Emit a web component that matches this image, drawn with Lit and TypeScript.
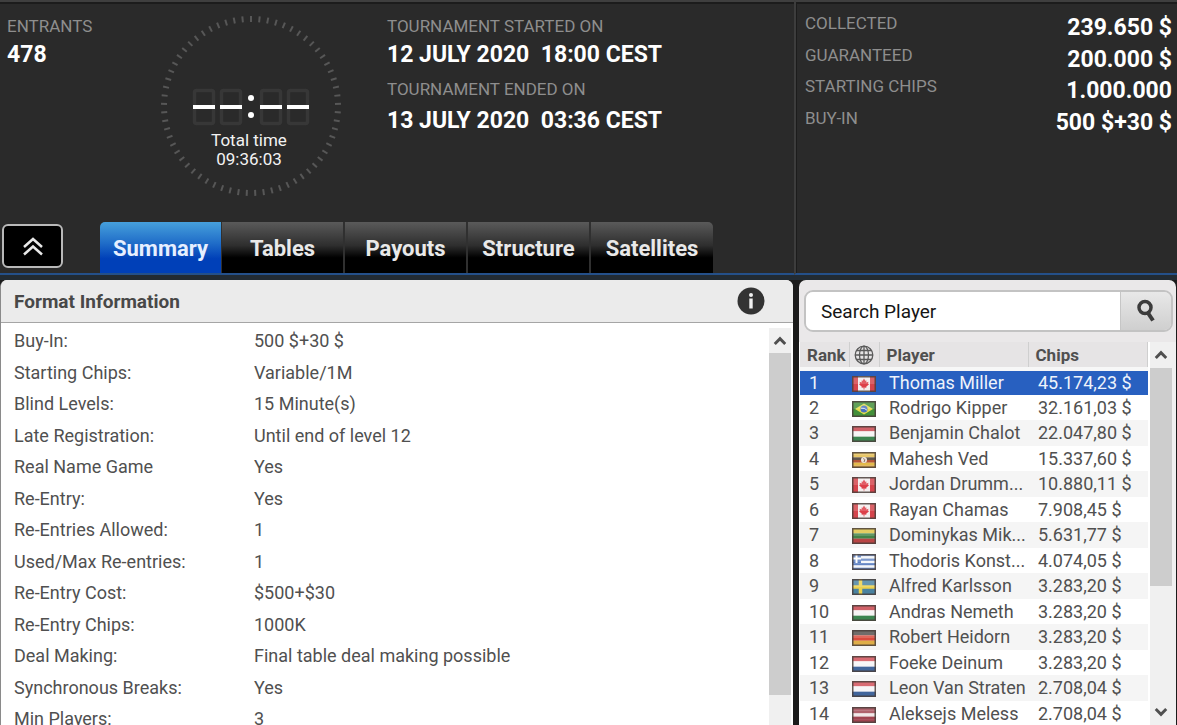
import { LitElement, html, svg, css } from "lit";
import { customElement, state } from "lit/decorators.js";
import { classMap } from "lit/directives/class-map.js";

const TABS = ["Summary", "Tables", "Payouts", "Structure", "Satellites"];

const FORMAT: [string, string][] = [
  ["Buy-In:", "500 $+30 $"],
  ["Starting Chips:", "Variable/1M"],
  ["Blind Levels:", "15 Minute(s)"],
  ["Late Registration:", "Until end of level 12"],
  ["Real Name Game", "Yes"],
  ["Re-Entry:", "Yes"],
  ["Re-Entries Allowed:", "1"],
  ["Used/Max Re-entries:", "1"],
  ["Re-Entry Cost:", "$500+$30"],
  ["Re-Entry Chips:", "1000K"],
  ["Deal Making:", "Final table deal making possible"],
  ["Synchronous Breaks:", "Yes"],
  ["Min Players:", "3"],
];

const MONEY: [string, string][] = [
  ["COLLECTED", "239.650 $"],
  ["GUARANTEED", "200.000 $"],
  ["STARTING CHIPS", "1.000.000"],
  ["BUY-IN", "500 $+30 $"],
];

const PLAYERS: [string, string, string][] = [
  ["ca", "Thomas Miller", "45.174,23 $"],
  ["br", "Rodrigo Kipper", "32.161,03 $"],
  ["hu", "Benjamin Chalot", "22.047,80 $"],
  ["ug", "Mahesh Ved", "15.337,60 $"],
  ["ca", "Jordan Drumm...", "10.880,11 $"],
  ["ca", "Rayan Chamas", "7.908,45 $"],
  ["lt", "Dominykas Mik...", "5.631,77 $"],
  ["gr", "Thodoris Konst...", "4.074,05 $"],
  ["se", "Alfred Karlsson", "3.283,20 $"],
  ["hu", "Andras Nemeth", "3.283,20 $"],
  ["de", "Robert Heidorn", "3.283,20 $"],
  ["nl", "Foeke Deinum", "3.283,20 $"],
  ["nl", "Leon Van Straten", "2.708,04 $"],
  ["lv", "Aleksejs Meless", "2.708,04 $"],
];

const bands = (colors: string[]) =>
  colors.map(
    (c, i) => svg`<rect x="0" y=${(i * 16) / colors.length} width="24" height=${16 / colors.length + 0.1} fill=${c}/>`
  );

const FLAGS: Record<string, unknown> = {
  ca: svg`<rect width="24" height="16" fill="#f4eeee"/><rect width="6" height="16" fill="#d5444c"/><rect x="18" width="6" height="16" fill="#d5444c"/>
    <path d="M12 2.5l1.3 2.3 1.2-.4-.3 2.2 2.3-.8-.5 1.8 1 .7-2.8 2.4.2 1.1-2-.3v2h-.8v-2l-2 .3.2-1.1L7 8.300l1-.7-.5-1.800 2.300.8-.3-2.200 1.200.4z" fill="#dd3f49"/>`,
  br: svg`<rect width="24" height="16" fill="#43903a"/><path d="M12 2.500L21 8l-9 5.500L3 8z" fill="#e4dc4c"/><circle cx="12" cy="8" r="3.500" fill="#4a72bd"/><path d="M9 7.200q3.500-.6 6 2" stroke="#dfe8ee" fill="none"/>`,
  hu: bands(["#c8434c", "#f6f4f4", "#3c8550"]),
  ug: svg`${bands(["#e3bb4b", "#e3bb4b", "#45362a", "#b45537", "#e3bb4b", "#d8a445"])}<circle cx="12" cy="8" r="3" fill="#eee5da"/><path d="M11 6.500l2 1-1 2.500" stroke="#8a6a5a" fill="none"/>`,
  lt: bands(["#dfc446", "#438348", "#b94545"]),
  gr: svg`${bands(["#6485c4", "#f4f6fa", "#6485c4", "#f4f6fa", "#6485c4", "#f4f6fa", "#6485c4"])}<rect width="9" height="9" fill="#5b7fc2"/><path d="M4.500 0v9M0 4.500h9" stroke="#fff" stroke-width="2"/>`,
  se: svg`<rect width="24" height="16" fill="#4a82a0"/><path d="M8.500 0v16M0 8h24" stroke="#ecd14c" stroke-width="3.500"/>`,
  de: bands(["#55504e", "#d94a3d", "#dfae48"]),
  nl: bands(["#d2505a", "#f6f5f7", "#41659b"]),
  lv: bands(["#a04450", "#a04450", "#f0e6e6", "#a04450", "#a04450"]),
};

const flag = (code: string) => html`
  <svg class="flag" viewBox="0 0 24 16" role="img" aria-label=${code.toUpperCase()}>
    ${FLAGS[code]}
    <rect width="24" height="8" fill="#fff" opacity=".16" />
    <rect x=".75" y=".75" width="22.500" height="14.500" fill="none" stroke="#4a403c" stroke-width="1.500" opacity=".85" />
  </svg>
`;

const chevron = (down = false) => html`
  <svg class="chevron" viewBox="0 0 12 10" aria-hidden="true">
    <path d=${down ? "M1.500 2.500L6 7l4.500-4.500" : "M1.500 7.500L6 3l4.500 4.500"} />
  </svg>
`;

@customElement("app-root")
export class AppRoot extends LitElement {
  @state() private tab = 0;
  @state() private selected = 0;

  static styles = css`
    :host {
      display: block;
      font-family: Roboto, "Liberation Sans", sans-serif;
      color: #505050;
      background: #1b1b1b;
    }
    * {
      box-sizing: border-box;
      margin: 0;
    }
    button, input {
      font: inherit;
      border: 0;
      padding: 0;
    }
    .page {
      display: grid;
      grid-template-columns: minmax(0, 1fr) 383px;
      grid-template-rows: auto minmax(0, 1fr);
      height: 100vh;
      overflow: hidden;
    }
    .top, .money {
      background: #2a2a2a;
      border-top: 2px solid #3f3f3f;
      border-bottom: 2px solid #24508a;
      box-shadow: inset 0 2px 0 #1c1c1c, 0 5px 0 #222b33;
    }
    .top {
      display: flex;
      flex-direction: column;
      justify-content: space-between;
      height: 275px;
    }
    .facts {
      display: grid;
      grid-template-columns: 160px 220px 1fr;
      padding-left: 7px;
    }
    .label {
      font-size: 17px;
      line-height: 20px;
      color: #8e8e8e;
      white-space: nowrap;
    }
    .value {
      font-size: 23px;
      line-height: 26px;
      font-weight: 700;
      color: #fff;
      white-space: pre;
    }
    .fact {
      padding-top: 14px;
    }
    .fact .label {
      margin-bottom: 6px;
    }
    .fact .value + .label {
      margin-top: 11px;
      margin-bottom: 9px;
    }
    .clock {
      display: grid;
      width: 168px;
      padding-top: 10px;
    }
    .clock > * {
      grid-area: 1 / 1;
    }
    .dial {
      width: 184px;
      height: 184px;
      display: block;
      overflow: visible;
    }
    .elapsed {
      width: 164px;
      padding-top: 119px;
      text-align: center;
      font-size: 17px;
      line-height: 19px;
      color: #f2f2f2;
    }
    .nav {
      display: flex;
      align-items: flex-end;
      padding-left: 2px;
    }
    .fold {
      width: 61px;
      height: 44px;
      margin: 0 37px 5px 0;
      background: #000;
      border: 2px solid #b9b9b9;
      border-radius: 6px;
      display: grid;
      place-items: center;
    }
    .fold svg {
      width: 22px;
      height: 20px;
      fill: none;
      stroke: #e8e8e8;
      stroke-width: 2.500;
    }
    .tabs {
      display: flex;
    }
    .tab {
      width: 123px;
      height: 51px;
      padding-top: 1px;
      font-size: 22px;
      font-weight: 700;
      color: #e9e9e9;
      background: linear-gradient(#5a5a5a, #2e2e2e 46%, #000 70%);
      border-right: 2px solid #303030;
    }
    .tab:first-child {
      width: 122px;
      border-top-left-radius: 5px;
      border-right-width: 1px;
    }
    .tab:last-child {
      width: 122px;
      border-top-right-radius: 5px;
      border-right: 0;
    }
    .tab.on {
      background: linear-gradient(#46a0dc, #1f6cc8 42%, #0040b8 72%);
      color: #e6efff;
    }
    .money {
      border-left: 2px solid #3d3d3d;
      box-shadow: inset 1px 2px 0 #1c1c1c, 0 5px 0 #222b33;
      padding: 11px 5px 0 9px;
    }
    .line {
      display: flex;
      justify-content: space-between;
      height: 32px;
    }
    .line:nth-child(even) {
      height: 31px;
    }
    .line .value {
      padding-top: 2px;
    }
    .panel {
      margin-top: 5px;
      border-radius: 7px 7px 0 0;
      background: #fff;
      display: flex;
      min-height: 0;
      overflow: hidden;
    }
    .format {
      flex-direction: column;
      margin-right: 1px;
      border-left: 1px solid #8a8a8a;
    }
    .head {
      flex: none;
      display: flex;
      align-items: center;
      justify-content: space-between;
      height: 43px;
      padding: 0 28px 0 13px;
      background: #ebebeb;
      border-bottom: 1px solid #a5a5a5;
    }
    h2 {
      padding-top: 2px;
      font-size: 19px;
      line-height: 22px;
      font-weight: 700;
      color: #484848;
    }
    .info {
      width: 28px;
      height: 28px;
      background: none;
    }
    .info svg {
      display: block;
    }
    .body {
      flex: 1;
      min-height: 0;
      display: flex;
    }
    dl {
      flex: 1;
      padding: 2px 0 0 13px;
    }
    dl div {
      display: flex;
      height: 32px;
      font-size: 18px;
      line-height: 32px;
    }
    dl div:nth-child(even) {
      height: 31px;
    }
    dt {
      width: 240px;
    }
    .bar {
      flex: none;
      width: 22px;
      margin-right: 2px;
      background: #f0f0f0;
      display: flex;
      flex-direction: column;
    }
    .format .bar {
      margin-top: 5px;
    }
    .bar button {
      flex: none;
      height: 25px;
      background: none;
      display: grid;
      place-items: center;
    }
    .chevron {
      width: 14px;
      height: 12px;
      fill: none;
      stroke: #505050;
      stroke-width: 2.500;
    }
    .track {
      flex: 1;
    }
    .thumb {
      background: #cdcdcd;
    }
    .side {
      flex-direction: column;
      margin-left: 5px;
      margin-right: 1px;
      background: #eae8e9;
    }
    .search {
      flex: none;
      display: flex;
      height: 42px;
      margin: 10px 3px 10px 5px;
      border: 2px solid #c3c3c3;
      border-radius: 9px;
      overflow: hidden;
    }
    .search input {
      flex: 1;
      min-width: 0;
      padding: 0 15px;
      font-size: 19px;
      background: #fff;
      color: #151515;
      outline: 0;
    }
    .search input::placeholder {
      color: #151515;
      opacity: 1;
    }
    .search button {
      width: 51px;
      background: linear-gradient(#e8e8e8, #cfcfcf);
      border-left: 1px solid #c6c6c6;
      display: grid;
      place-items: center;
    }
    .list {
      flex: 1;
      min-height: 0;
      display: flex;
      background: #f0f0f0;
    }
    .rows {
      flex: 1;
      overflow: hidden;
      padding-left: 1px;
      background: #fff;
      border-right: 2px solid #fff;
    }
    table {
      width: 100%;
      border-collapse: collapse;
      table-layout: fixed;
    }
    .c-rank { width: 49px; }
    .c-flag { width: 30px; }
    .c-name { width: 149px; }
    th {
      height: 25px;
      padding: 1px 0 0 7px;
      background: #e6e4e5;
      border-right: 1px solid #cfcfcf;
      font-size: 17px;
      line-height: 24px;
      font-weight: 700;
      text-align: left;
      color: #505050;
    }
    th:nth-child(2) {
      padding-left: 4px;
    }
    th svg {
      display: block;
    }
    thead {
      border-bottom: 4px solid #f7f7f7;
    }
    td {
      height: 25px;
      padding: 0 0 0 9px;
      font-size: 18px;
      line-height: 24px;
      white-space: nowrap;
    }
    td:nth-child(2) {
      padding-left: 3px;
    }
    td:nth-child(3), td:nth-child(4) {
      padding-left: 10px;
    }
    tbody tr:nth-child(odd) {
      background: #f5f5f5;
    }
    tbody tr:nth-child(odd) td {
      height: 26px;
    }
    tbody tr.sel {
      background: #2860c0;
      color: #eef3fb;
    }
    .flag {
      display: block;
      width: 24px;
      height: 16px;
      margin-top: 2px;
    }
    .side .bar {
      width: 22px;
      margin-right: 4px;
    }
    .side .bar button {
      height: 26px;
    }
  `;

  private dial() {
    const ticks = Array.from({ length: 65 }, (_, i) => (i * 360) / 65);
    const digit = (x: number) => svg`
      <rect x=${x + 1.5} y="78.500" width="19" height="33" rx="2" fill="none" stroke="#373737" stroke-width="3.500"/>
      <rect x=${x} y="93" width="22" height="4" fill="#fff"/>`;
    return html`
      <svg class="dial" viewBox="0 0 184 184" aria-hidden="true">
        ${ticks.map(
          (a) => svg`<line x1="84" y1="4" x2="84" y2="10" stroke="#575757" stroke-width="2" transform="rotate(${a} 84 94)"/>`
        )}
        ${[26, 53, 93, 120].map(digit)}
        <circle cx="84" cy="86" r="3" fill="#fff" />
        <circle cx="84" cy="103" r="3" fill="#fff" />
      </svg>
    `;
  }

  render() {
    return html`
      <div class="page">
        <header class="top">
          <div class="facts">
            <div class="fact">
              <div class="label">ENTRANTS</div>
              <div class="value">478</div>
            </div>
            <div class="clock">
              ${this.dial()}
              <div class="elapsed">Total time<br />09:36:03</div>
            </div>
            <div class="fact">
              <div class="label">TOURNAMENT STARTED ON</div>
              <div class="value">12 JULY 2020  18:00 CEST</div>
              <div class="label">TOURNAMENT ENDED ON</div>
              <div class="value">13 JULY 2020  03:36 CEST</div>
            </div>
          </div>
          <div class="nav">
            <button class="fold" aria-label="Collapse header">
              <svg viewBox="0 0 22 20"><path d="M2 11L11 3l9 8M2 18.500L11 10.500l9 8" /></svg>
            </button>
            <div class="tabs" role="tablist">
              ${TABS.map(
                (t, i) => html`<button
                  role="tab"
                  aria-selected=${this.tab === i}
                  class=${classMap({ tab: true, on: this.tab === i })}
                  @click=${() => (this.tab = i)}
                >${t}</button>`
              )}
            </div>
          </div>
        </header>

        <section class="money">
          ${MONEY.map(
            ([k, v]) => html`<div class="line"><span class="label">${k}</span><span class="value">${v}</span></div>`
          )}
        </section>

        <section class="panel format">
          <div class="head">
            <h2>Format Information</h2>
            <button class="info" aria-label="Information">
              <svg viewBox="0 0 28 28" width="28" height="28">
                <circle cx="14" cy="14" r="13.500" fill="#333" />
                <circle cx="14" cy="8" r="2" fill="#f0f0f0" />
                <path d="M12.300 11.500h3.400v10h-3.400z" fill="#f0f0f0" />
              </svg>
            </button>
          </div>
          <div class="body">
            <dl>
              ${FORMAT.map(([k, v]) => html`<div><dt>${k}</dt><dd>${v}</dd></div>`)}
            </dl>
            <div class="bar">
              <button aria-label="Scroll up">${chevron()}</button>
              <div class="track"><div class="thumb" style="height:92%"></div></div>
            </div>
          </div>
        </section>

        <aside class="panel side">
          <form class="search" @submit=${(e: Event) => e.preventDefault()}>
            <input type="text" aria-label="Search Player" placeholder="Search Player" />
            <button aria-label="Search">
              <svg viewBox="0 0 20 24" width="20" height="24" fill="none" stroke="#3c3c3c">
                <circle cx="9" cy="8.500" r="6" stroke-width="3.500" />
                <path d="M12 14l5 7.500" stroke-width="4" />
              </svg>
            </button>
          </form>
          <div class="list">
            <div class="rows">
              <table>
                <colgroup><col class="c-rank" /><col class="c-flag" /><col class="c-name" /><col /></colgroup>
                <thead>
                  <tr>
                    <th>Rank</th>
                    <th aria-label="Country">
                      <svg viewBox="0 0 20 20" width="20" height="20" fill="none" stroke="#5a5a5a" stroke-width="1.300">
                        <circle cx="10" cy="10" r="8.800" />
                        <ellipse cx="10" cy="10" rx="4.500" ry="8.800" />
                        <path d="M10 1v18M1 10h18M2.500 5.500h15M2.500 14.500h15" />
                      </svg>
                    </th>
                    <th>Player</th>
                    <th>Chips</th>
                  </tr>
                </thead>
                <tbody>
                  ${PLAYERS.map(
                    ([c, name, chips], i) => html`<tr
                      class=${classMap({ sel: this.selected === i })}
                      @click=${() => (this.selected = i)}
                    ><td>${i + 1}</td><td>${flag(c)}</td><td>${name}</td><td>${chips}</td></tr>`
                  )}
                </tbody>
              </table>
            </div>
            <div class="bar">
              <button aria-label="Scroll up">${chevron()}</button>
              <div class="track"><div class="thumb" style="height:66%"></div></div>
              <button aria-label="Scroll down">${chevron(true)}</button>
            </div>
          </div>
        </aside>
      </div>
    `;
  }
}
